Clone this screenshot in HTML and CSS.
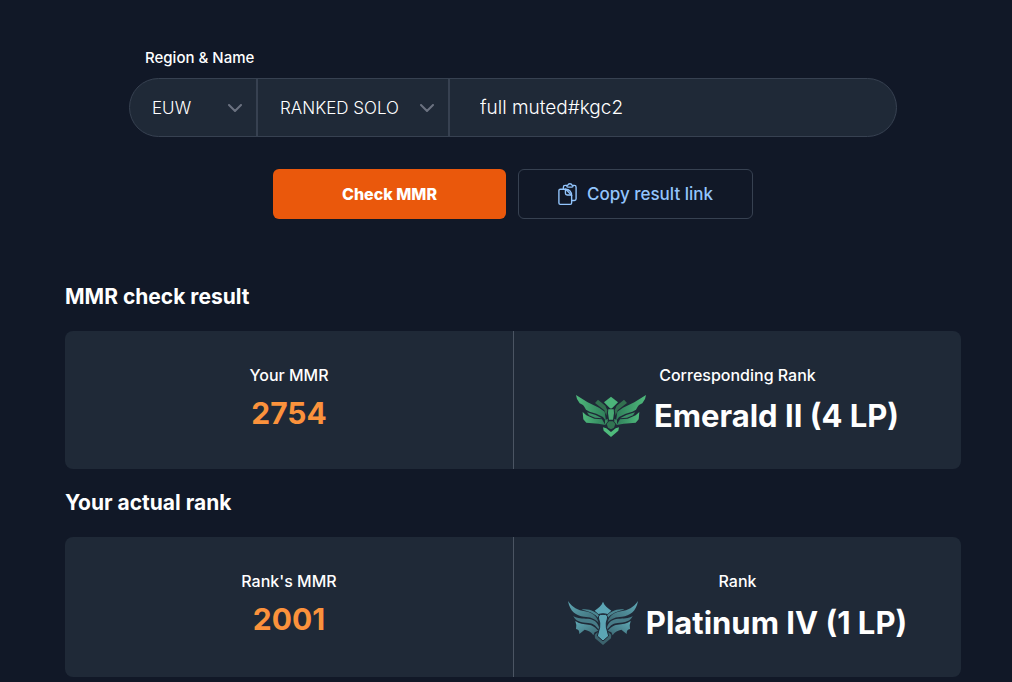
FILE: index.html
```html
<!DOCTYPE html>
<html lang="en">
<head>
    <meta charset="UTF-8">
    <meta name="viewport" content="width=device-width, initial-scale=1.0">
    <title>MMR check</title>
    <link rel="stylesheet" href="styles.css">
</head>
<body>
    <main>
        <form class="search">
            <label class="search-label" for="summoner">Region &amp; Name</label>
            <div class="search-bar">
                <div class="select region">
                    <select name="region" aria-label="Region">
                        <option>EUW</option>
                        <option>EUNE</option>
                        <option>NA</option>
                    </select>
                    <svg class="chevron" viewBox="0 0 14 8"><path d="M1 1l6 6 6-6"/></svg>
                </div>
                <div class="select queue">
                    <select name="queue" aria-label="Queue">
                        <option>RANKED SOLO</option>
                        <option>RANKED FLEX</option>
                    </select>
                    <svg class="chevron" viewBox="0 0 14 8"><path d="M1 1l6 6 6-6"/></svg>
                </div>
                <input type="text" id="summoner" name="summoner" value="full muted#kgc2" spellcheck="false">
            </div>
            <div class="actions">
                <button type="submit" class="btn btn-primary">Check MMR</button>
                <button type="button" class="btn btn-outline">
                    <svg class="copy-icon" viewBox="0 0 54 64">
                        <path d="M6 18H22L39 36V58Q39 62 35 62H6Q2 62 2 58V22Q2 18 6 18Z"/>
                        <path d="M21 18V30Q21 35 26 35H39M22 18C32 18 39 26 39 36"/>
                        <path d="M15 17V12Q15 7 20 7H25M43 7H47Q52 7 52 12V46Q52 51 47 51H40"/>
                        <path d="M28 6Q29 2 34 2Q39 2 40 6Q43 6 43 9Q43 12 40 12H28Q25 12 25 9Q25 6 28 6Z"/>
                    </svg>
                    Copy result link
                </button>
            </div>
        </form>

        <section class="result">
            <h2>MMR check result</h2>
            <div class="card">
                <div class="card-col">
                    <span class="title">Your MMR</span>
                    <span class="mmr">2754</span>
                </div>
                <div class="card-col">
                    <span class="title">Corresponding Rank</span>
                    <div class="rank">
                        <svg class="emblem emerald" viewBox="27 30 210 126">
                            <defs>
                                <linearGradient id="emeraldWing" x1="0" x2="1" y1="0" y2="0">
                                    <stop offset="0" stop-color="#4fb97c"/>
                                    <stop offset="1" stop-color="#2f7f5a"/>
                                </linearGradient>
                                <g id="emeraldHalf">
                                    <path fill="url(#emeraldWing)" d="M27 30L62 52L96 68L113 80L117 108L108 96L88 86L68 80L57 74L52 65L48 60L38 55L30 42Z"/>
                                    <path fill="#32704f" d="M84 54L93 44L115 62L121 76L118 92L112 76Z"/>
                                    <path fill="#3b9166" d="M60 82L86 90L105 100L84 98L66 91Z"/>
                                    <path fill="url(#emeraldWing)" d="M47 81L58 91L82 101L105 103L115 120L94 116L58 113L49 103Z"/>
                                    <path fill="#3a8a60" d="M114 106L122 101L122 110L114 120Z"/>
                                </g>
                            </defs>
                            <use href="#emeraldHalf"/>
                            <use href="#emeraldHalf" transform="translate(264 0) scale(-1 1)"/>
                            <path fill="#4cb47a" d="M132 35L153 52L138 67L132 71L126 67L111 52Z"/>
                            <path fill="#48a873" d="M124 73H140L141 84L138 104H126L123 84Z"/>
                            <path fill="#327452" d="M126 109H138L145 117L141 128L132 133L123 128L119 117Z"/>
                            <path fill="#4fbb7c" d="M108 127L118 130L132 141L146 130L156 127L154 137L132 156L110 137Z"/>
                        </svg>
                        <span class="rank-name">Emerald II (4 LP)</span>
                    </div>
                </div>
            </div>
        </section>

        <section class="result">
            <h2>Your actual rank</h2>
            <div class="card">
                <div class="card-col">
                    <span class="title">Rank's MMR</span>
                    <span class="mmr">2001</span>
                </div>
                <div class="card-col">
                    <span class="title">Rank</span>
                    <div class="rank">
                        <svg class="emblem platinum" viewBox="18 33 210 132">
                            <defs>
                                <linearGradient id="platinumWing" x1="0" x2="1" y1="0" y2="1">
                                    <stop offset="0" stop-color="#5fa9b6"/>
                                    <stop offset="1" stop-color="#3b6670"/>
                                </linearGradient>
                                <g id="platinumHalf">
                                    <path fill="url(#platinumWing)" d="M18 33C31 52 48 61 69 64C90 67 105 77 110 98C97 84 84 81 66 80C42 77 24 65 18 33Z"/>
                                    <path fill="#4b8792" d="M59 59C77 54 105 65 117 83L114 92C106 76 88 64 59 59Z"/>
                                    <path fill="#477b87" d="M34 78C47 86 61 86 78 86C93 87 107 95 111 112L110 119C100 105 92 100 79 99C57 98 40 94 34 78Z"/>
                                    <path fill="url(#platinumWing)" d="M40 93C52 101 64 103 79 104C94 106 101 113 109 122L98 127L94 136C88 125 78 121 68 119L52 132C52 122 49 118 42 117Q45 106 40 93Z"/>
                                    <path fill="#3c636d" d="M107 126L98 134L99 145L123 165V153L109 141Z"/>
                                </g>
                            </defs>
                            <use href="#platinumHalf"/>
                            <use href="#platinumHalf" transform="translate(246 0) scale(-1 1)"/>
                            <path fill="#5ba5b4" d="M123 35C127 47 137 54 148 62L137 72Q123 67 109 72L98 62C109 54 119 47 123 35Z"/>
                            <path fill="#5ba5b4" stroke="#1f2937" stroke-width="3" d="M123 73Q140 72 136 87Q131 98 133 112L140 138L123 153L106 138L113 112Q115 98 110 87Q106 72 123 73Z"/>
                        </svg>
                        <span class="rank-name">Platinum IV (1 LP)</span>
                    </div>
                </div>
            </div>
        </section>
    </main>
</body>
</html>
```
FILE: styles.css
```css
:root {
    --bg: #111827;
    --bg-card: #1f2937;
    --border: #374151;
    --divider: #4b5563;
    --text: #fff;
    --orange: #ea580c;
    --orange-light: #fb923c;
    --link: #93c5fd;
}

* {
    box-sizing: border-box;
}

body {
    margin: 0;
    padding: 48px 51px 4px 65px;
    background-color: var(--bg);
    color: var(--text);
    font-family: Inter, "Liberation Sans", sans-serif;
    font-size: 16px;
    line-height: 24px;
}

main {
    max-width: 896px;
    margin: 0 auto;
}

.search {
    max-width: 768px;
    margin: 0 auto 64px;
}

.search-label {
    display: block;
    margin: 0 16px 10px;
    font-size: 15px;
    line-height: 20px;
    font-weight: 500;
}

.search-bar {
    display: flex;
    height: 59px;
    background-color: var(--bg-card);
    border: 1px solid var(--border);
    border-radius: 30px;
    overflow: hidden;
}

.select {
    position: relative;
    border-right: 2px solid var(--border);
}

.region {
    flex: 0 0 128px;
}

.queue {
    flex: 0 0 192px;
}

.search-bar select,
.search-bar input {
    width: 100%;
    height: 100%;
    border: none;
    outline: none;
    background: transparent;
    color: var(--text);
    font-family: inherit;
    font-size: 17px;
    font-weight: 300;
}

.search-bar select {
    appearance: none;
    padding: 0 36px 0 22px;
}

.search-bar input {
    flex: 1;
    min-width: 0;
    padding: 0 30px;
    font-size: 19px;
}

.chevron {
    position: absolute;
    top: 50%;
    right: 14px;
    width: 14px;
    height: 8px;
    margin-top: -4px;
    fill: none;
    stroke: #6b7280;
    stroke-width: 2;
    stroke-linecap: round;
    stroke-linejoin: round;
    pointer-events: none;
}

.actions {
    display: flex;
    gap: 12px;
    max-width: 480px;
    margin: 32px auto 0;
}

.btn {
    flex: 1;
    display: flex;
    align-items: center;
    justify-content: center;
    gap: 10px;
    height: 50px;
    padding: 0;
    border-radius: 6px;
    font-family: inherit;
    font-size: 16px;
    cursor: pointer;
}

.btn-primary {
    border: none;
    background-color: var(--orange);
    color: var(--text);
    font-weight: 800;
}

.btn-outline {
    border: 1px solid var(--border);
    background-color: transparent;
    color: var(--link);
    font-size: 17px;
    font-weight: 500;
}

.copy-icon {
    width: 19px;
    height: 22px;
    fill: none;
    stroke: currentColor;
    stroke-width: 4;
    stroke-linecap: round;
    stroke-linejoin: round;
}

.result {
    margin-bottom: 20px;
}

.result:last-child {
    margin-bottom: 0;
}

.result h2 {
    margin: 0 0 20px;
    font-size: 21px;
    line-height: 28px;
    font-weight: 700;
}

.card {
    display: grid;
    grid-template-columns: 1fr 1fr;
    background-color: var(--bg-card);
    border-radius: 8px;
}

.card-col {
    display: flex;
    flex-direction: column;
    align-items: center;
    gap: 8px;
    padding: 32px 16px;
}

.card-col + .card-col {
    border-left: 1px solid var(--divider);
}

.title {
    font-weight: 500;
}

.mmr,
.rank-name {
    line-height: 36px;
    font-weight: 700;
}

.mmr {
    color: var(--orange-light);
    font-size: 30px;
}

.rank-name {
    font-size: 31px;
}

.rank {
    display: flex;
    align-items: center;
    gap: 8px;
}

.emblem {
    width: 70px;
}

.emerald {
    height: 42px;
}

.platinum {
    height: 44px;
}
```
